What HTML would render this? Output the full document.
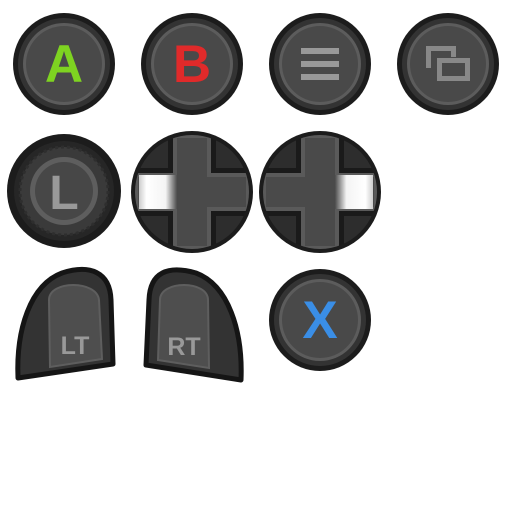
<!DOCTYPE html>
<html><head><style>html,body{margin:0;padding:0;background:#fff;width:512px;height:512px;overflow:hidden}</style></head>
<body>
<svg width="512" height="512" viewBox="0 0 512 512" xmlns="http://www.w3.org/2000/svg" font-family="Liberation Sans, sans-serif" font-weight="bold">
<defs>
<g id="btn">
<circle r="51" fill="#1c1c1c"/>
<circle r="46" fill="#333"/>
<circle r="41" fill="#5c5c5c"/>
<circle r="38" fill="#494949"/>
</g>
<linearGradient id="gl" x1="0" x2="1"><stop offset="0" stop-color="#ccc"/><stop offset="0.2" stop-color="#fff"/><stop offset="0.7" stop-color="#f4f4f4"/><stop offset="1" stop-color="#4c4c4c"/></linearGradient>
<linearGradient id="gr" x1="1" x2="0"><stop offset="0" stop-color="#ccc"/><stop offset="0.2" stop-color="#fff"/><stop offset="0.7" stop-color="#f4f4f4"/><stop offset="1" stop-color="#4c4c4c"/></linearGradient>
<clipPath id="cc"><circle r="57"/></clipPath>
<g id="pad">
<circle r="61" fill="#1c1c1c"/>
<g clip-path="url(#cc)">
<circle r="57" fill="#2d2d2d"/>
<path d="M-24,-70 H24 V-24 H70 V24 H24 V70 H-24 V24 H-70 V-24 H-24Z" fill="#1a1a1a"/>
<path d="M-19,-58 H19 V-19 H58 V19 H19 V58 H-19 V19 H-58 V-19 H-19Z" fill="#5a5a5a"/>
<path d="M-15,-54 H15 V-15 H54 V15 H15 V54 H-15 V15 H-54 V-15 H-15Z" fill="#4a4a4a"/>
</g>
</g>
</defs>
<g transform="translate(64,64)"><use href="#btn"/><text x="0" y="18" font-size="53" text-anchor="middle" fill="#7ed321">A</text></g>
<g transform="translate(192,64)"><use href="#btn"/><text x="0" y="18" font-size="53" text-anchor="middle" fill="#e02a2a">B</text></g>
<g transform="translate(320,64)"><use href="#btn"/>
<rect x="-19" y="-16" width="38" height="6" fill="#999"/><rect x="-19" y="-3" width="38" height="6" fill="#999"/><rect x="-19" y="10" width="38" height="6" fill="#999"/></g>
<g transform="translate(448,64)"><use href="#btn"/>
<path d="M-19.5,4 V-15.5 H5.5 V-7" fill="none" stroke="#888" stroke-width="5"/>
<rect x="-8.5" y="-3.5" width="28" height="18" fill="none" stroke="#888" stroke-width="5"/></g>
<g transform="translate(64,191)">
<circle r="57" fill="#1c1c1c"/><circle r="50" fill="#262626"/>
<circle r="44" fill="#3a3a3a" stroke="#2e2e2e" stroke-width="3" stroke-dasharray="3 3"/>
<circle r="34" fill="#5e5e5e"/><circle r="29" fill="#474747"/>
<text x="0" y="18" font-size="48" text-anchor="middle" fill="#999">L</text></g>
<g transform="translate(192,192)"><use href="#pad"/>
<rect x="-53" y="-17" width="38" height="34" fill="url(#gl)"/></g>
<g transform="translate(320,192)"><use href="#pad"/>
<rect x="15" y="-17" width="38" height="34" fill="url(#gr)"/></g>
<path d="M18,378 C16,330 30,285 62,273 C90,264 110,272 111,300 L113,364 Z" fill="#333" stroke="#151515" stroke-width="5" stroke-linejoin="round"/>
<path d="M50,367 L49,300 C49,280 97,280 99,300 L102,359 Z" fill="#4e4e4e" stroke="#5e5e5e" stroke-width="2"/>
<text x="75" y="354" font-size="25" text-anchor="middle" fill="#999">LT</text>
<path d="M241,380 C243,330 228,285 196,273 C168,265 150,272 149,300 L146,365 Z" fill="#333" stroke="#151515" stroke-width="5" stroke-linejoin="round"/>
<path d="M158,360 L160,300 C160,280 208,280 208,300 L209,368 Z" fill="#4e4e4e" stroke="#5e5e5e" stroke-width="2"/>
<text x="184" y="355" font-size="25" text-anchor="middle" fill="#999">RT</text>
<g transform="translate(320,320)"><use href="#btn"/><text x="0" y="18" font-size="53" text-anchor="middle" fill="#3a8ee6">X</text></g>
</svg>
</body></html>
